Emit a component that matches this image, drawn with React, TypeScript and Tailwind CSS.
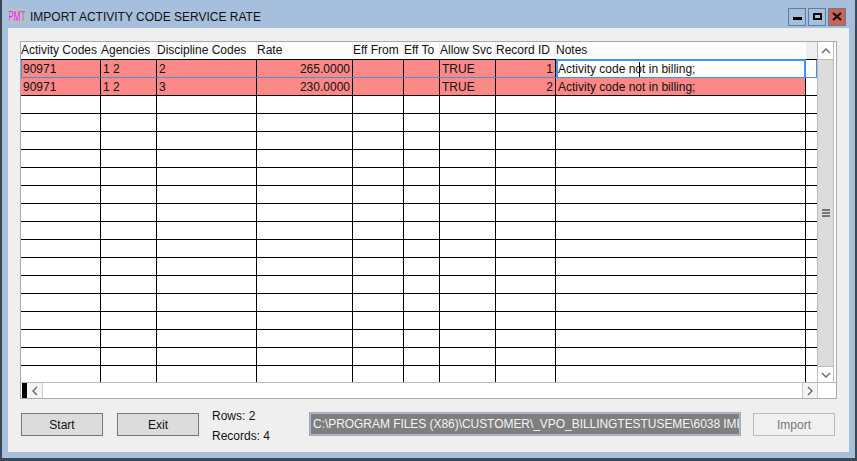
const columns = [
  { name: "Activity Codes", width: "w-[80px]" },
  { name: "Agencies", width: "w-[56px]" },
  { name: "Discipline Codes", width: "w-[100px]" },
  { name: "Rate", width: "w-[96px]" },
  { name: "Eff From", width: "w-[51px]" },
  { name: "Eff To", width: "w-[36px]" },
  { name: "Allow Svc", width: "w-[56px]" },
  { name: "Record ID", width: "w-[60px]" },
];

const rows = [
  ["90971", "1 2", "2", "265.0000", "", "", "TRUE", "1"],
  ["90971", "1 2", "3", "230.0000", "", "", "TRUE", "2"],
];

const rightAligned = [3, 7];
const emptyRows = Array.from({ length: 16 });

const Chevron = ({ points }: { points: string }) => (
  <svg width="10" height="10" viewBox="0 0 10 10" fill="none">
    <polyline points={points} stroke="#666666" strokeWidth="1.4" />
  </svg>
);

const WindowButton = ({ children, className }: { children: React.ReactNode; className: string }) => (
  <div className={`w-[18px] h-[18px] border border-[#5f7d9c] flex items-center justify-center ${className}`}>
    {children}
  </div>
);

const TitleBar = () => (
  <div className="h-[28px] flex items-center pl-[7px] pr-[9px] pt-[5px]">
    <div className="w-[16px] h-[15px] -mt-[2px] bg-[#bcbcc4] overflow-hidden flex items-center justify-center">
      <span className="text-[14px] leading-none scale-x-[0.6] font-light whitespace-nowrap">
        <span className="text-[#f01cf0]">PM</span>
        <span className="text-[#8a7a90]">T</span>
      </span>
    </div>
    <span className="ml-[5px] text-[12px] text-[#111111]">IMPORT ACTIVITY CODE SERVICE RATE</span>
    <div className="ml-auto flex gap-[2px]">
      <WindowButton className="">
        <div className="w-[9px] h-[3px] mt-[4px] bg-black" />
      </WindowButton>
      <WindowButton className="">
        <div className="w-[9px] h-[7px] border-2 border-black" />
      </WindowButton>
      <WindowButton className="bg-[#cd6351]">
        <svg width="10" height="9" viewBox="0 0 10 9">
          <path d="M1 1 L9 8 M9 1 L1 8" stroke="#111111" strokeWidth="2.2" />
        </svg>
      </WindowButton>
    </div>
  </div>
);

const Grid = () => (
  <div className="flex-1 min-w-0">
    <div className="h-[18px] flex border-b border-black">
      {columns.map((c) => (
        <div key={c.name} className={`${c.width} shrink-0 bg-[#fcfcfc] border-r border-[#eeeeee] leading-[16px] whitespace-nowrap overflow-hidden`}>
          {c.name}
        </div>
      ))}
      <div className="w-[250px] shrink-0 bg-[#fcfcfc] leading-[16px]">Notes</div>
      <div className="flex-1 bg-[#eeeeee]" />
    </div>
    {rows.map((row, i) => (
      <div key={i} className={`h-[18px] flex border-b ${i === 0 ? "border-[#4a8fd8]" : "border-black"}`}>
        {row.map((cell, j) => (
          <div
            key={j}
            className={`${columns[j].width} shrink-0 bg-[#fc8888] border-r border-black px-[2px] leading-[18px] ${rightAligned.includes(j) ? "text-right" : ""} ${i === 0 && j === 0 ? "border-l border-l-[#4a8fd8] pl-[1px]" : ""}`}
          >
            {cell}
          </div>
        ))}
        {i === 0 ? (
          <div className="relative w-[250px] shrink-0 bg-white border-2 border-b-0 border-[#3d97ee] -mt-[1px] leading-[17px]">
            Activity code not in billing;
            <div className="absolute left-[81px] top-[1px] w-px h-[15px] bg-black" />
          </div>
        ) : (
          <div className="w-[250px] shrink-0 bg-[#fc8888] border-r border-black leading-[18px] pl-[2px]">
            Activity code not in billing;
          </div>
        )}
        <div className={`flex-1 bg-white ${i === 0 ? "border-r border-[#4a8fd8]" : ""}`} />
      </div>
    ))}
    {emptyRows.map((_, i) => (
      <div key={i} className={`flex ${i === 15 ? "h-[16px]" : "h-[18px] border-b border-black"}`}>
        {columns.map((c) => (
          <div key={c.name} className={`${c.width} shrink-0 border-r border-black`} />
        ))}
        <div className="w-[250px] shrink-0 border-r border-black" />
      </div>
    ))}
  </div>
);

const VerticalScrollbar = () => (
  <div className="w-[17px] flex flex-col border-r border-[#bbbbbb]">
    <div className="h-[18px] flex items-center justify-center border-l border-b border-[#bbbbbb] bg-white">
      <Chevron points="1,7 5,3 9,7" />
    </div>
    <div className="flex-1 bg-[#dcdcdc] border-l border-[#bbbbbb] flex flex-col items-center justify-center gap-px">
      <div className="w-[8px] h-[2px] bg-[#777777]" />
      <div className="w-[8px] h-[2px] bg-[#777777]" />
      <div className="w-[8px] h-[2px] bg-[#777777]" />
    </div>
    <div className="h-[16px] flex items-center justify-center border-l border-t border-[#bbbbbb] bg-white">
      <Chevron points="1,3 5,7 9,3" />
    </div>
  </div>
);

const HorizontalScrollbar = () => (
  <div className="h-[16px] flex border-t border-[#bbbbbb] bg-white">
    <div className="w-[5px] ml-px bg-black" />
    <div className="w-[16px] flex items-center justify-center border-r border-[#cccccc] bg-[#f4f4f4]">
      <Chevron points="7,1 3,5 7,9" />
    </div>
    <div className="flex-1" />
    <div className="w-[16px] flex items-center justify-center border-l border-r border-[#cccccc] bg-[#f4f4f4]">
      <Chevron points="3,1 7,5 3,9" />
    </div>
    <div className="w-[18px]" />
  </div>
);

const App = () => {
  return (
    <div className="w-[857px] h-[461px] flex flex-col bg-[#a6bfdc] border-l-2 border-r-2 border-b-[3px] border-[#3a4754] text-[12px] text-[#111111] font-['Liberation_Sans',Arial,sans-serif]">
      <TitleBar />
      <div className="mx-[6px] h-[424px] bg-[#efefef] pt-[13px] pl-[12px] pr-[12px]">
        <div className="h-[358px] border border-[#aaaaaa] bg-white flex flex-col">
          <div className="flex-1 flex min-h-0 pr-[2px]">
            <Grid />
            <VerticalScrollbar />
          </div>
          <HorizontalScrollbar />
        </div>
        <div className="flex mt-[14px]">
          <button className="w-[82px] h-[23px] ml-px bg-[#dcdcdc] border border-[#777777]">Start</button>
          <button className="w-[82px] h-[23px] ml-[14px] bg-[#dcdcdc] border border-[#777777]">Exit</button>
          <div className="ml-[13px] -mt-[7px] leading-[20px]">
            <div>Rows: 2</div>
            <div>Records: 4</div>
          </div>
          <div className="w-[432px] h-[24px] ml-[39px] -mt-px bg-[#7f7f7f] border-2 border-[#a3bbd8] outline outline-[#aaaaaa] -outline-offset-1 px-[2px] leading-[20px] tracking-[-0.05px] text-[#f4f4f4] whitespace-nowrap overflow-hidden">
            C:\PROGRAM FILES (X86)\CUSTOMER\_VPO_BILLINGTESTUSEME\6038 IMP
          </div>
          <button className="w-[82px] h-[23px] ml-[12px] bg-[#f0f0f0] border border-[#bbbbbb] text-[#777777]">Import</button>
        </div>
      </div>
    </div>
  );
};

export default App;
